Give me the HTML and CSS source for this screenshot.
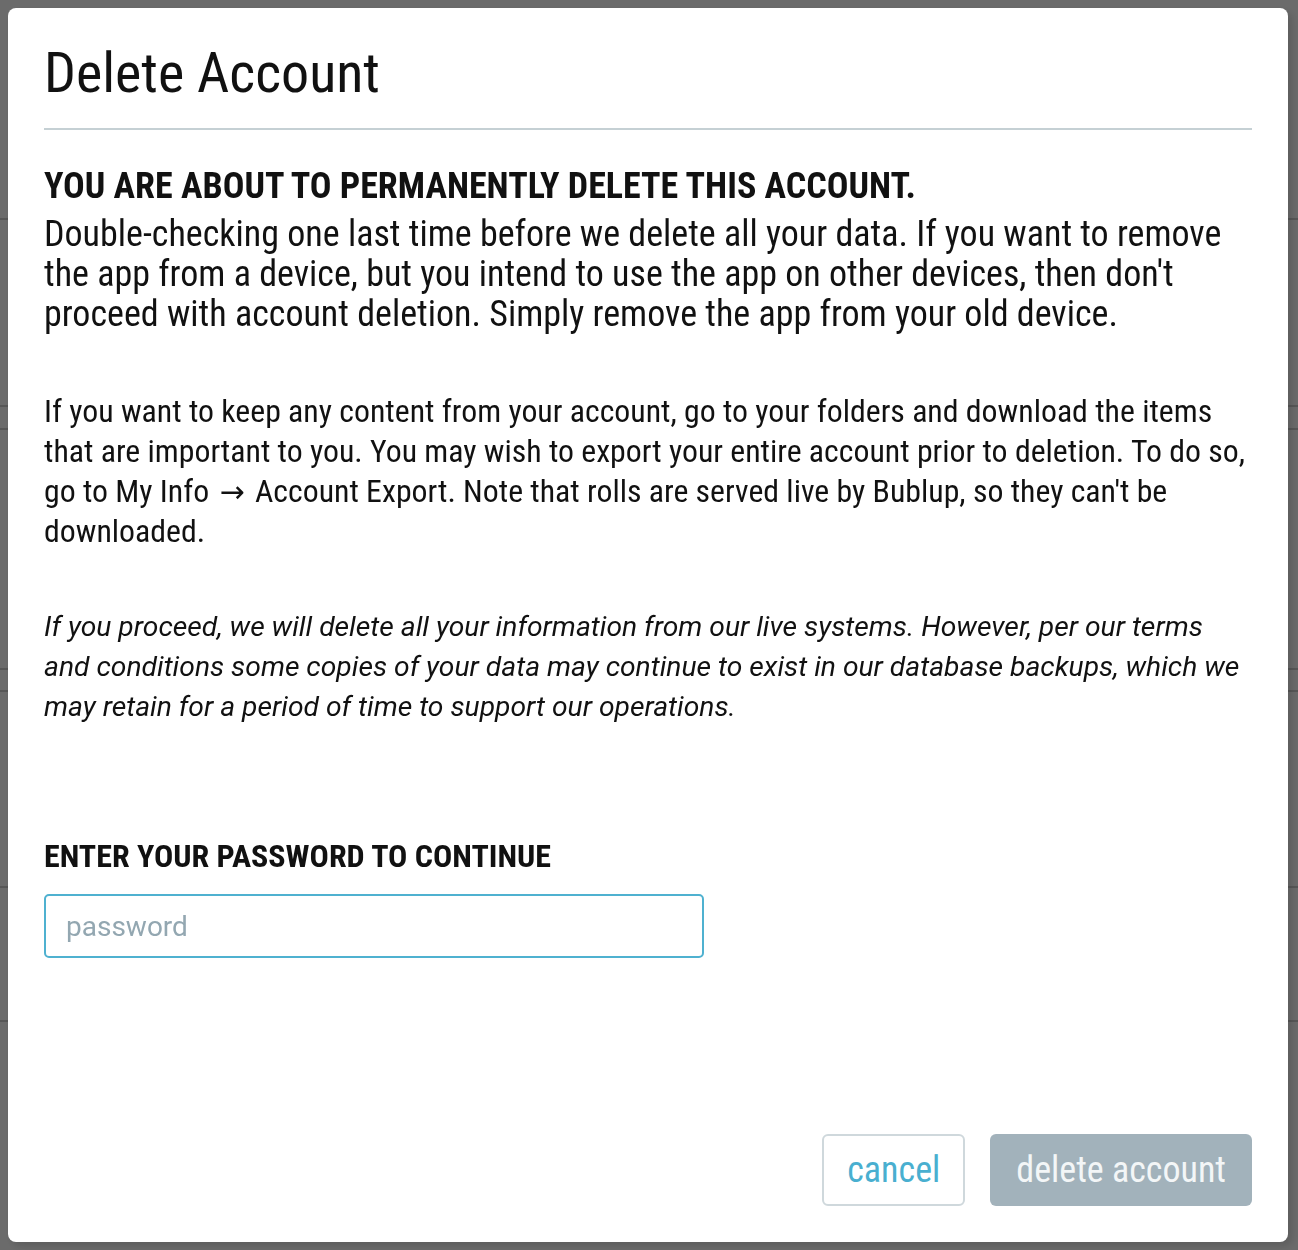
FILE: index.html
```html
<!DOCTYPE html>
<html lang="en">
<head>
    <meta charset="UTF-8">
    <meta name="viewport" content="width=device-width, initial-scale=1.0">
    <title>Delete Account</title>
    <link rel="stylesheet" href="styles.css">
</head>
<body>
    <!-- page behind the dialog -->
    <div class="page">
        <div class="page-row" style="height: 220px"></div>
        <div class="page-row" style="height: 187px"></div>
        <div class="page-row" style="height: 23px"></div>
        <div class="page-row" style="height: 240px"></div>
        <div class="page-row" style="height: 22px"></div>
        <div class="page-row" style="height: 196px"></div>
        <div class="page-row" style="height: 134px"></div>
    </div>

    <div class="overlay">
        <div class="modal">
            <h1 class="modal-title">Delete Account</h1>

            <div class="modal-body">
                <h2 class="warning-title">YOU ARE ABOUT TO PERMANENTLY DELETE THIS ACCOUNT.</h2>
                <p class="lead">Double-checking one last time before we delete all your data. If you want to remove the app from a device, but you intend to use the app on other devices, then don't proceed with account deletion. Simply remove the app from your old device.</p>

                <p class="info">If you want to keep any content from your account, go to your folders and download the items that are important to you. You may wish to export your entire account prior to deletion. To do so, go to My Info <span class="arrow">&rarr;</span> Account Export. Note that rolls are served live by Bublup, so they can't be downloaded.</p>

                <p class="legal">If you proceed, we will delete all your information from our live systems. However, per our terms and conditions some copies of your data may continue to exist in our database backups, which we may retain for a period of time to support our operations.</p>

                <form class="password-form">
                    <label for="password" class="field-label">ENTER YOUR PASSWORD TO CONTINUE</label>
                    <input type="password" id="password" placeholder="password">
                </form>
            </div>

            <div class="modal-actions">
                <button type="button" class="btn btn-cancel">cancel</button>
                <button type="button" class="btn btn-delete" disabled>delete account</button>
            </div>
        </div>
    </div>
</body>
</html>
```

FILE: styles.css
```css
body {
    margin: 0;
    padding: 0;
    background: #fff;
    font-family: 'Roboto Condensed', Roboto, 'Liberation Sans', sans-serif;
    font-stretch: condensed;
    color: #111;
}

.page-row {
    border-bottom: 2px solid #d0d0d0;
    box-sizing: border-box;
}

.overlay {
    position: fixed;
    top: 0;
    left: 0;
    right: 0;
    bottom: 0;
    padding: 8px 10px 8px 8px;
    background: rgba(0, 0, 0, 0.58);
}

.modal {
    background: #fff;
    border-radius: 8px;
    height: 1234px;
    box-sizing: border-box;
    padding: 33px 36px 36px 36px;
    display: flex;
    flex-direction: column;
    box-shadow: 4px 4px 8px rgba(0, 0, 0, 0.15);
}

.modal-title {
    font-size: 56px;
    font-weight: 400;
    line-height: 64px;
    margin: 0;
    padding-bottom: 23px;
    border-bottom: 2px solid #c5d0d4;
}

.modal-body {
    flex: 1;
}

.warning-title {
    font-size: 36px;
    font-weight: 700;
    line-height: 40px;
    margin: 36px 0 0;
}

.lead {
    font-size: 36px;
    line-height: 40px;
    margin: 8px 0 0;
}

.info {
    font-size: 31.8px;
    line-height: 40px;
    margin: 57px 0 0;
}

.arrow {
    font-family: 'DejaVu Sans', sans-serif;
    font-stretch: normal;
    font-size: 30px;
    line-height: 1;
    padding: 0 3px;
}

.legal {
    font-family: Roboto, 'Liberation Sans', sans-serif;
    font-stretch: normal;
    font-style: italic;
    font-size: 28.25px;
    line-height: 40px;
    margin: 56px 0 0;
}

.password-form {
    margin-top: 109px;
}

.field-label {
    display: block;
    font-size: 32px;
    font-weight: 700;
    line-height: 40px;
}

input[type="password"] {
    display: block;
    margin-top: 18px;
    width: 660px;
    height: 64px;
    box-sizing: border-box;
    padding: 0 20px;
    font-family: Roboto, sans-serif;
    font-size: 28px;
    border: 2px solid #4fb1d0;
    border-radius: 5px;
    outline: none;
}

input::placeholder {
    color: #93a7b1;
}

.modal-actions {
    display: flex;
    justify-content: flex-end;
    gap: 25px;
}

.btn {
    font-family: inherit;
    font-stretch: condensed;
    font-size: 36px;
    height: 72px;
    padding: 0 23px;
    border-radius: 6px;
    cursor: pointer;
}

.btn-cancel {
    background: #fff;
    color: #49afd0;
    border: 2px solid #cfd8dc;
}

.btn-delete {
    background: #a2b2bb;
    color: #f3f6f7;
    border: none;
    padding: 0 26px;
}
```
